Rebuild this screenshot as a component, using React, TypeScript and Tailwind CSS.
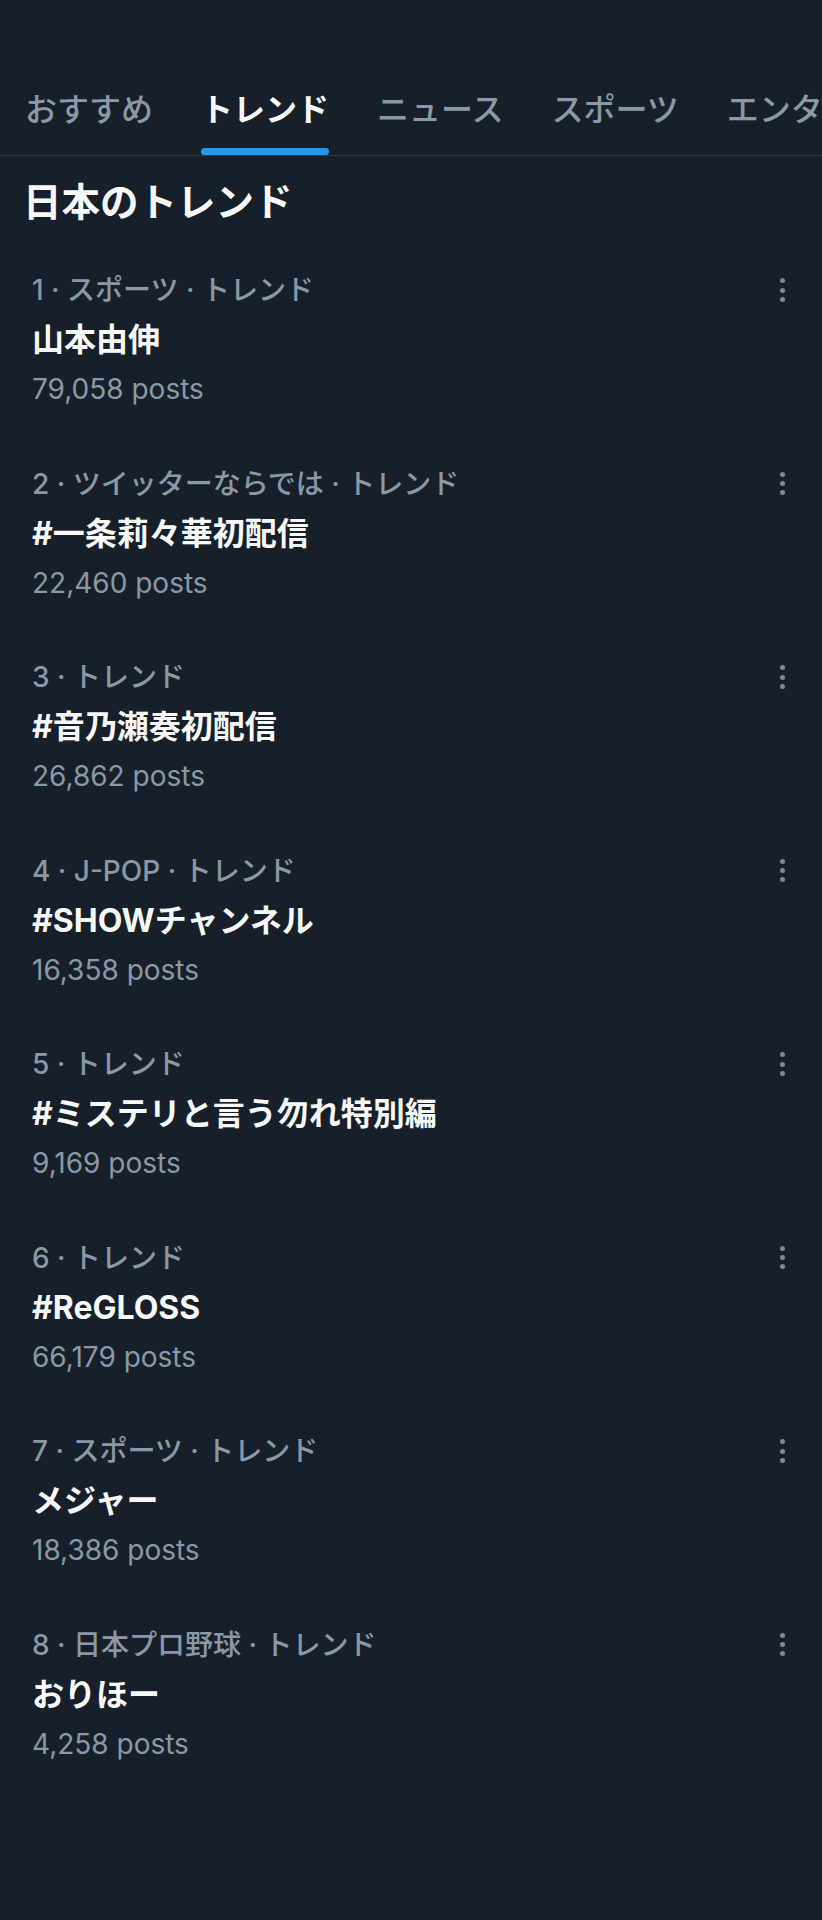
const tabs = [
  { label: 'おすすめ', active: false },
  { label: 'トレンド', active: true },
  { label: 'ニュース', active: false },
  { label: 'スポーツ', active: false },
  { label: 'エンタメ', active: false },
];

const trends = [
  { rank: 1, category: 'スポーツ · トレンド', title: '山本由伸', posts: '79,058' },
  { rank: 2, category: 'ツイッターならでは · トレンド', title: '#一条莉々華初配信', posts: '22,460' },
  { rank: 3, category: 'トレンド', title: '#音乃瀬奏初配信', posts: '26,862' },
  { rank: 4, category: 'J-POP · トレンド', title: '#SHOWチャンネル', posts: '16,358' },
  { rank: 5, category: 'トレンド', title: '#ミステリと言う勿れ特別編', posts: '9,169' },
  { rank: 6, category: 'トレンド', title: '#ReGLOSS', posts: '66,179' },
  { rank: 7, category: 'スポーツ · トレンド', title: 'メジャー', posts: '18,386' },
  { rank: 8, category: '日本プロ野球 · トレンド', title: 'おりほー', posts: '4,258' },
];

const font = { fontFamily: 'Inter, "Noto Sans CJK JP", sans-serif' };

function MoreDots() {
  return (
    <div className="flex flex-col gap-[4.3px]">
      <span className="block size-[5px] rounded-full bg-[#7d8a97]" />
      <span className="block size-[5px] rounded-full bg-[#7d8a97]" />
      <span className="block size-[5px] rounded-full bg-[#7d8a97]" />
    </div>
  );
}

export default function App() {
  return (
    <div className="min-h-[1920px] w-[822px] bg-[#17202a] overflow-hidden" style={font}>
      {/* Tabs */}
      <div className="flex pt-[90px] pl-px border-b border-[#303b46] whitespace-nowrap overflow-hidden">
        {tabs.map((tab) => (
          <div key={tab.label} className="px-[24px] shrink-0">
            <div className="flex flex-col">
              <span
                className={`text-[32px] leading-[40px] ${
                  tab.active ? 'font-bold text-[#f7f9f9]' : 'font-medium text-[#8b98a5]'
                }`}
              >
                {tab.label}
              </span>
              <div
                className={`mt-[18px] h-[7px] rounded-full ${tab.active ? 'bg-[#1d9bf0]' : 'bg-transparent'}`}
              />
            </div>
          </div>
        ))}
      </div>

      {/* Header */}
      <div className="pt-[22px] pb-[16px] pl-[23px]">
        <h1 className="text-[38.5px] leading-[48px] font-bold text-[#f7f9f9]">日本のトレンド</h1>
      </div>

      {/* Trend list */}
      <div>
        {trends.map((t) => (
          <div key={t.rank} className="pl-[32px] pr-[37px] pt-[32px] pb-[30.5px]">
            <div className="flex items-center justify-between h-[32px]">
              <p className="text-[28px] leading-[32px] font-medium text-[#8b98a5]">
                {t.rank} · {t.category}
              </p>
              <MoreDots />
            </div>
            <p className="mt-[14px] text-[32px] leading-[40px] font-bold text-[#f7f9f9]">{t.title}</p>
            <p className="mt-[13px] text-[28px] leading-[32px] text-[#8b98a5]">{t.posts} posts</p>
          </div>
        ))}
      </div>
    </div>
  );
}
